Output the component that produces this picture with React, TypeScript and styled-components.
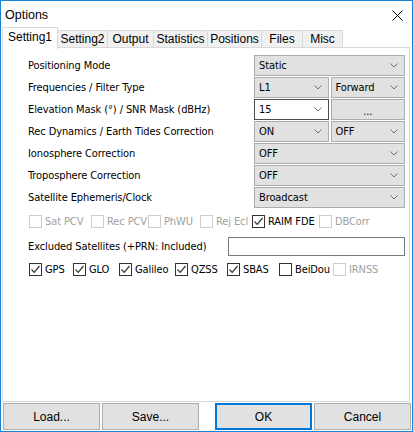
import React from "react";
import styled, { createGlobalStyle } from "styled-components";

const Global = createGlobalStyle`
  html, body { margin: 0; padding: 0; background: #ffffff; }
  body { font-family: "DejaVu Sans Condensed", "Liberation Sans", Arial, sans-serif; }
  * { box-sizing: border-box; }
`;

const Window = styled.div`
  width: 413px;
  height: 432px;
  border: 1px solid #1883d7;
  background: #ffffff;
  display: flex;
  flex-direction: column;
  color: #000;
  font-family: "DejaVu Sans Condensed", "DejaVu Sans", sans-serif;
  font-stretch: condensed;
  font-size: 11px;
  letter-spacing: -0.1px;
`;

const TitleBar = styled.div`
  height: 26px;
  display: flex;
  align-items: center;
  justify-content: space-between;
  padding: 2px 9px 0 4px;
  font-family: "Liberation Sans", Arial, sans-serif;
  font-stretch: normal;
  letter-spacing: 0;
  font-size: 12.5px;
`;

const TabStrip = styled.div`
  height: 21px;
  display: flex;
  align-items: flex-end;
  padding-left: 1px;
`;

const Tab = styled.div<{ $active?: boolean; $w: number }>`
  position: relative;
  z-index: ${(p) => (p.$active ? 2 : 1)};
  flex: 0 0 ${(p) => p.$w}px;
  height: ${(p) => (p.$active ? 22 : 18)}px;
  margin-bottom: ${(p) => (p.$active ? -1 : 0)}px;
  margin-right: -1px;
  border: 1px solid #d9d9d9;
  border-bottom: ${(p) => (p.$active ? "none" : "1px solid #d9d9d9")};
  background: ${(p) => (p.$active ? "#ffffff" : "#f0f0f0")};
  display: flex;
  align-items: center;
  justify-content: center;
  padding-bottom: ${(p) => (p.$active ? 3 : 0)}px;
  font-family: "Liberation Sans", Arial, sans-serif;
  font-stretch: normal;
  letter-spacing: 0;
  font-size: 12px;
`;

const Panel = styled.div`
  flex: 1;
  margin: -1px 2px 0 1px;
  border: 1px solid #d9d9d9;
  padding: 7px 4px 0 25px;
  display: flex;
  flex-direction: column;
`;

const Row = styled.div`
  height: 21px;
  margin-bottom: 1px;
  display: flex;
  align-items: center;
`;

const Label = styled.div`
  flex: 1;
  min-width: 0;
  white-space: nowrap;
`;

const Controls = styled.div`
  flex: 0 0 151px;
  height: 21px;
  display: flex;
  gap: 2px;
`;

const Combo = styled.div<{ $edit?: boolean }>`
  flex: 1 1 0;
  min-width: 0;
  height: 21px;
  display: flex;
  align-items: center;
  justify-content: space-between;
  padding: 0 6px 0 4px;
  background: ${(p) => (p.$edit ? "#ffffff" : "#e1e1e1")};
  border: 1px solid ${(p) => (p.$edit ? "#4d4d4d" : "#adadad")};
`;

const SmallButton = styled.div`
  flex: 1 1 0;
  min-width: 0;
  height: 21px;
  display: flex;
  align-items: center;
  justify-content: center;
  padding: 3px 5px 0 5px;
  background: #e1e1e1;
  border: 1px solid #adadad;
`;

const CheckRow = styled.div<{ $mt: number }>`
  height: 15px;
  margin-top: ${(p) => p.$mt}px;
  display: flex;
  align-items: center;
  padding-left: 1px;
`;

const CheckItem = styled.div<{ $w?: number; $disabled?: boolean }>`
  flex: 0 0 ${(p) => (p.$w ? `${p.$w}px` : "auto")};
  display: flex;
  align-items: center;
  gap: 3px;
  color: ${(p) => (p.$disabled ? "#a0a0a0" : "#000")};
  white-space: nowrap;
`;

const Box = styled.div<{ $disabled?: boolean }>`
  flex: 0 0 13px;
  width: 13px;
  height: 13px;
  border: 1px solid ${(p) => (p.$disabled ? "#cccccc" : "#333333")};
  background: #fff;
  display: flex;
  align-items: center;
  justify-content: center;
`;

const ExcludedRow = styled.div`
  height: 19px;
  margin-top: 8px;
  display: flex;
  align-items: center;
`;

const TextBox = styled.div`
  flex: 0 0 177px;
  height: 19px;
  border: 1px solid #7a7a7a;
  background: #fff;
`;

const ButtonBar = styled.div`
  display: flex;
  padding: 1px 2px 1px 2px;
  gap: 2px;
`;

const Spacer = styled.div`
  flex: 0 0 12px;
`;

const DlgButton = styled.div<{ $default?: boolean }>`
  flex: 0 0 97px;
  height: 27px;
  display: flex;
  align-items: center;
  justify-content: center;
  background: #e1e1e1;
  border: ${(p) => (p.$default ? "2px solid #0078d7" : "1px solid #adadad")};
  font-family: "Liberation Sans", Arial, sans-serif;
  font-stretch: normal;
  letter-spacing: 0;
  font-size: 12px;
`;

const Chevron = () => (
  <svg width="8" height="5" viewBox="0 0 8 5">
    <path d="M0.5 0.5 L4 4 L7.5 0.5" fill="none" stroke="#707070" strokeWidth="1" />
  </svg>
);

const CloseIcon = () => (
  <svg width="11" height="11" viewBox="0 0 11 11">
    <path d="M0.5 0.5 L10.5 10.5 M10.5 0.5 L0.5 10.5" stroke="#000" strokeWidth="1" />
  </svg>
);

const Check = ({ checked, disabled, label, w }: { checked?: boolean; disabled?: boolean; label: string; w?: number }) => (
  <CheckItem $w={w} $disabled={disabled}>
    <Box $disabled={disabled}>
      {checked && (
        <svg width="11" height="11" viewBox="0 0 11 11">
          <path d="M1.5 5.5 L4.2 8.3 L9.5 2" fill="none" stroke="#333" strokeWidth="1.2" />
        </svg>
      )}
    </Box>
    {label}
  </CheckItem>
);

const tabs: [string, number][] = [
  ["Setting1", 56],
  ["Setting2", 51],
  ["Output", 47],
  ["Statistics", 55],
  ["Positions", 55],
  ["Files", 42],
  ["Misc", 41],
];

export default function App() {
  return (
    <>
      <Global />
      <Window>
        <TitleBar>
          <span>Options</span>
          <CloseIcon />
        </TitleBar>
        <TabStrip>
          {tabs.map(([t, w], i) => (
            <Tab key={t} $active={i === 0} $w={w}>
              {t}
            </Tab>
          ))}
        </TabStrip>
        <Panel>
          <Row>
            <Label>Positioning Mode</Label>
            <Controls>
              <Combo>Static<Chevron /></Combo>
            </Controls>
          </Row>
          <Row>
            <Label>Frequencies / Filter Type</Label>
            <Controls>
              <Combo>L1<Chevron /></Combo>
              <Combo>Forward<Chevron /></Combo>
            </Controls>
          </Row>
          <Row>
            <Label>Elevation Mask (°) / SNR Mask (dBHz)</Label>
            <Controls>
              <Combo $edit>15<Chevron /></Combo>
              <SmallButton>...</SmallButton>
            </Controls>
          </Row>
          <Row>
            <Label>Rec Dynamics / Earth Tides Correction</Label>
            <Controls>
              <Combo>ON<Chevron /></Combo>
              <Combo>OFF<Chevron /></Combo>
            </Controls>
          </Row>
          <Row>
            <Label>Ionosphere Correction</Label>
            <Controls>
              <Combo>OFF<Chevron /></Combo>
            </Controls>
          </Row>
          <Row>
            <Label>Troposphere Correction</Label>
            <Controls>
              <Combo>OFF<Chevron /></Combo>
            </Controls>
          </Row>
          <Row>
            <Label>Satellite Ephemeris/Clock</Label>
            <Controls>
              <Combo>Broadcast<Chevron /></Combo>
            </Controls>
          </Row>
          <CheckRow $mt={5}>
            <Check disabled label="Sat PCV" w={62} />
            <Check disabled label="Rec PCV" w={57} />
            <Check disabled label="PhWU" w={52} />
            <Check disabled label="Rej Ecl" w={52} />
            <Check checked label="RAIM FDE" w={67} />
            <Check disabled label="DBCorr" />
          </CheckRow>
          <ExcludedRow>
            <Label>Excluded Satellites (+PRN: Included)</Label>
            <TextBox />
          </ExcludedRow>
          <CheckRow $mt={6}>
            <Check checked label="GPS" w={44} />
            <Check checked label="GLO" w={46} />
            <Check checked label="Galileo" w={56} />
            <Check checked label="QZSS" w={52} />
            <Check checked label="SBAS" w={52} />
            <Check label="BeiDou" w={54} />
            <Check disabled label="IRNSS" />
          </CheckRow>
        </Panel>
        <ButtonBar>
          <DlgButton>Load...</DlgButton>
          <DlgButton>Save...</DlgButton>
          <Spacer />
          <DlgButton $default>OK</DlgButton>
          <DlgButton>Cancel</DlgButton>
        </ButtonBar>
      </Window>
    </>
  );
}
